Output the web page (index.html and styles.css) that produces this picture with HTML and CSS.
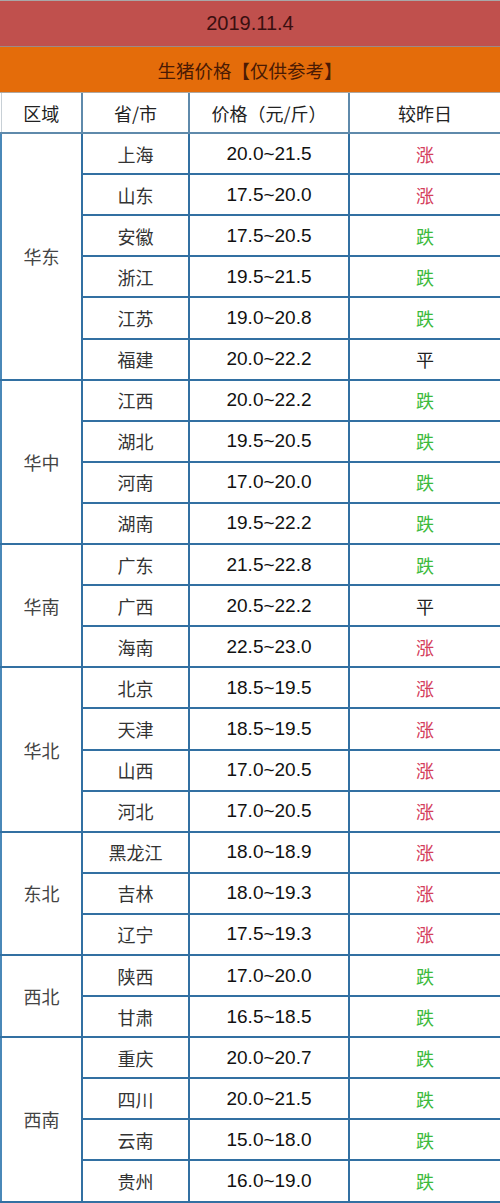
FILE: index.html
```html
<!DOCTYPE html>
<html lang="zh">
<head>
<meta charset="utf-8">
<title>生猪价格</title>
<link rel="stylesheet" href="styles.css">
</head>
<body>
<div class="sheet">
  <div class="date">2019.11.4</div>
  <div class="subtitle">生猪价格【仅供参考】</div>
  <table class="grid">
    <colgroup>
      <col class="c1"><col class="c2"><col class="c3"><col class="c4">
    </colgroup>
    <thead>
      <tr><th>区域</th><th>省/市</th><th>价格（元/斤）</th><th>较昨日</th></tr>
    </thead>
    <tbody>
      <tr><td class="region" rowspan="6">华东</td><td>上海</td><td class="num">20.0~21.5</td><td class="up">涨</td></tr>
      <tr><td>山东</td><td class="num">17.5~20.0</td><td class="up">涨</td></tr>
      <tr><td>安徽</td><td class="num">17.5~20.5</td><td class="down">跌</td></tr>
      <tr><td>浙江</td><td class="num">19.5~21.5</td><td class="down">跌</td></tr>
      <tr><td>江苏</td><td class="num">19.0~20.8</td><td class="down">跌</td></tr>
      <tr><td>福建</td><td class="num">20.0~22.2</td><td class="flat">平</td></tr>

      <tr><td class="region" rowspan="4">华中</td><td>江西</td><td class="num">20.0~22.2</td><td class="down">跌</td></tr>
      <tr><td>湖北</td><td class="num">19.5~20.5</td><td class="down">跌</td></tr>
      <tr><td>河南</td><td class="num">17.0~20.0</td><td class="down">跌</td></tr>
      <tr><td>湖南</td><td class="num">19.5~22.2</td><td class="down">跌</td></tr>

      <tr><td class="region" rowspan="3">华南</td><td>广东</td><td class="num">21.5~22.8</td><td class="down">跌</td></tr>
      <tr><td>广西</td><td class="num">20.5~22.2</td><td class="flat">平</td></tr>
      <tr><td>海南</td><td class="num">22.5~23.0</td><td class="up">涨</td></tr>

      <tr><td class="region" rowspan="4">华北</td><td>北京</td><td class="num">18.5~19.5</td><td class="up">涨</td></tr>
      <tr><td>天津</td><td class="num">18.5~19.5</td><td class="up">涨</td></tr>
      <tr><td>山西</td><td class="num">17.0~20.5</td><td class="up">涨</td></tr>
      <tr><td>河北</td><td class="num">17.0~20.5</td><td class="up">涨</td></tr>

      <tr><td class="region" rowspan="3">东北</td><td>黑龙江</td><td class="num">18.0~18.9</td><td class="up">涨</td></tr>
      <tr><td>吉林</td><td class="num">18.0~19.3</td><td class="up">涨</td></tr>
      <tr><td>辽宁</td><td class="num">17.5~19.3</td><td class="up">涨</td></tr>

      <tr><td class="region" rowspan="2">西北</td><td>陕西</td><td class="num">17.0~20.0</td><td class="down">跌</td></tr>
      <tr><td>甘肃</td><td class="num">16.5~18.5</td><td class="down">跌</td></tr>

      <tr><td class="region" rowspan="4">西南</td><td>重庆</td><td class="num">20.0~20.7</td><td class="down">跌</td></tr>
      <tr><td>四川</td><td class="num">20.0~21.5</td><td class="down">跌</td></tr>
      <tr><td>云南</td><td class="num">15.0~18.0</td><td class="down">跌</td></tr>
      <tr><td>贵州</td><td class="num">16.0~19.0</td><td class="down">跌</td></tr>
    </tbody>
  </table>
</div>
</body>
</html>
```

FILE: styles.css
```css
html, body {
  margin: 0;
  padding: 0;
  background: #ffffff;
}

.sheet {
  width: 500px;
  font-family: "Noto Sans CJK SC", "Noto Sans", sans-serif;
}

.date {
  height: 47px;
  box-sizing: border-box;
  background: #c0504d;
  border-top: 1px solid #a8a8a8;
  border-bottom: 1px solid #9c8a88;
  display: flex;
  align-items: center;
  justify-content: center;
  font-family: "Liberation Sans", Arial, sans-serif;
  font-size: 20px;
  color: #3a0f10;
}

.subtitle {
  height: 46px;
  box-sizing: border-box;
  background: #e46c0a;
  border-bottom: 1px solid #b0a8a0;
  display: flex;
  align-items: center;
  justify-content: center;
  font-size: 18.5px;
  color: #4a1a04;
  padding-top: 1px;
}

.grid {
  width: 500px;
  border-collapse: collapse;
  table-layout: fixed;
}

.c1 { width: 81px; }
.c2 { width: 107px; }
.c3 { width: 160px; }
.c4 { width: 152px; }

.grid th,
.grid td {
  height: 39.1px;
  padding: 0;
  text-align: center;
  vertical-align: middle;
  border: 2px solid #3270a2;
  font-weight: normal;
  font-size: 18px;
  color: #333333;
}

.grid th {
  color: #222222;
  border-top: none;
  border-color: #5f8aab;
}

.grid thead th:first-child { border-left: 1px solid #c8d0d6; }

.grid td.region {
  color: #444444;
  border-left-color: #4a88b8;
}

.grid td.num {
  font-family: "Liberation Sans", Arial, sans-serif;
  font-size: 19px;
  color: #111111;
}

.grid td.up { color: #d4405c; }
.grid td.down { color: #3cba3c; }
.grid td.flat { color: #222222; }
```
